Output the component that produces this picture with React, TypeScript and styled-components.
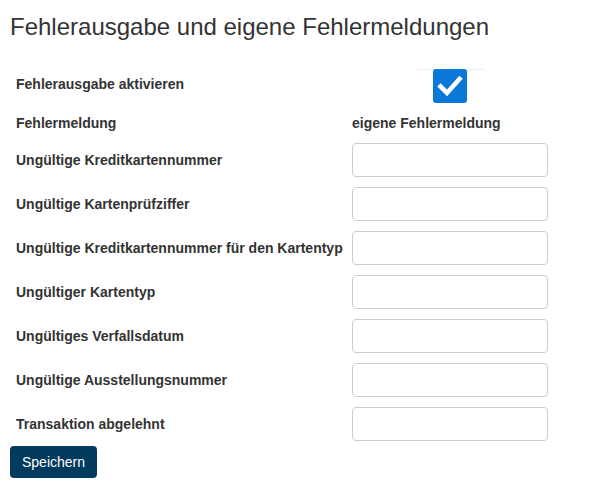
import styled, { createGlobalStyle } from "styled-components";

const Global = createGlobalStyle`
    body {
        margin: 0;
        background: #fff;
        font-family: "Liberation Sans", Arial, sans-serif;
        color: #333;
    }
`;

const Page = styled.div`
    padding: 14px 10px;
`;

const Title = styled.h1`
    margin: 0 0 30px;
    font-size: 24px;
    font-weight: 400;
    line-height: 25px;
    color: #333;
`;

const Form = styled.div`
    display: grid;
    grid-template-columns: 336px 196px;
    row-gap: 10px;
    padding-left: 6px;
    align-items: center;
`;

const Label = styled.div`
    font-size: 14px;
    font-weight: 700;
    line-height: 20px;
    color: #333;
    white-space: nowrap;
`;

const TopLabel = styled(Label)`
    margin-bottom: 4px;
`;

const CheckCell = styled.div`
    display: flex;
    justify-content: center;
`;

const CheckFrame = styled.div`
    width: 67px;
    display: flex;
    justify-content: center;
    border-top: 1px solid #eee;
`;

const CheckBox = styled.span`
    display: flex;
    align-items: center;
    justify-content: center;
    width: 34px;
    height: 34px;
    margin-top: -1px;
    border-radius: 3px;
    background: #0a78d6;
`;

const Input = styled.input`
    box-sizing: border-box;
    width: 196px;
    height: 34px;
    border: 1px solid #ccc;
    border-radius: 4px;
    background: #fff;
    font: inherit;
`;

const Button = styled.button`
    margin-top: 5px;
    height: 32px;
    padding: 0 12px;
    border: none;
    border-radius: 4px;
    background: #003a5d;
    color: #fff;
    font-family: "Liberation Sans", Arial, sans-serif;
    font-size: 14px;
`;

const fields = [
    "Ungültige Kreditkartennummer",
    "Ungültige Kartenprüfziffer",
    "Ungültige Kreditkartennummer für den Kartentyp",
    "Ungültiger Kartentyp",
    "Ungültiges Verfallsdatum",
    "Ungültige Ausstellungsnummer",
    "Transaktion abgelehnt",
];

const App = () => {
    return (
        <Page>
            <Global />
            <Title>Fehlerausgabe und eigene Fehlermeldungen</Title>
            <Form>
                <TopLabel>Fehlerausgabe aktivieren</TopLabel>
                <CheckCell>
                    <CheckFrame>
                        <CheckBox>
                            <svg width="26" height="26" viewBox="0 0 26 26">
                                <path
                                    d="M3.5 13.5 L10 20 L22.5 6"
                                    fill="none"
                                    stroke="#fff"
                                    strokeWidth="4.6"
                                    strokeLinecap="square"
                                />
                            </svg>
                        </CheckBox>
                    </CheckFrame>
                </CheckCell>
                <Label>Fehlermeldung</Label>
                <Label>eigene Fehlermeldung</Label>
                {fields.map((f) => {
                    return [
                        <Label key={f + "l"}>{f}</Label>,
                        <Input key={f + "i"} type="text" />,
                    ];
                })}
            </Form>
            <Button>Speichern</Button>
        </Page>
    );
};
export default App;
